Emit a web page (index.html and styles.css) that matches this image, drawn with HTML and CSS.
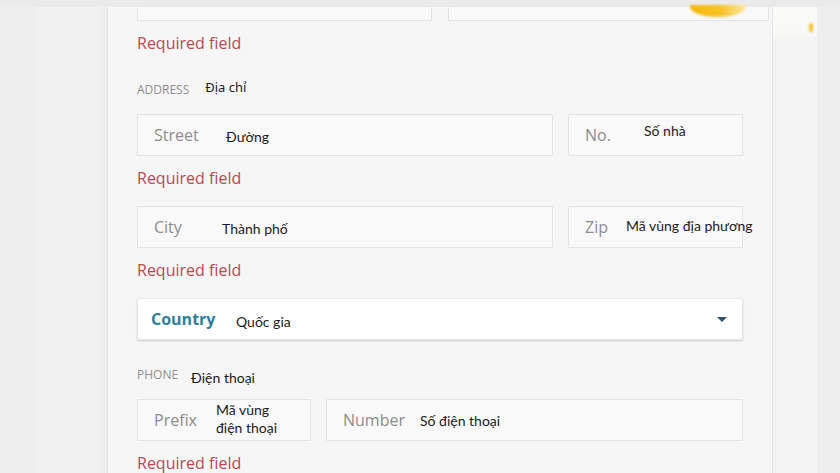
FILE: index.html
```html
<!DOCTYPE html>
<html lang="vi">
<head>
<meta charset="utf-8">
<title>Address form</title>
<link rel="stylesheet" href="styles.css">
</head>
<body>
<div class="topbar"></div>
<div class="stage">
  <div class="gutter"></div>
  <main class="panel">
    <span class="blob"></span>
    <div class="row row-top">
      <div class="box box-top1"></div>
      <div class="box box-top2"></div>
    </div>
    <div class="error">Required field</div>

    <div class="section section-address">
      <span class="section-name">ADDRESS</span>
      <span class="note note-address">Địa chỉ</span>
    </div>
    <div class="row row-first">
      <div class="box box-grow">
        <span class="label lab-street">Street</span>
        <span class="note note-down">Đường</span>
      </div>
      <div class="box box-small">
        <span class="label lab-no">No.</span>
        <span class="note note-up">Số nhà</span>
      </div>
    </div>
    <div class="error">Required field</div>

    <div class="row">
      <div class="box box-grow">
        <span class="label lab-city">City</span>
        <span class="note note-down">Thành phố</span>
      </div>
      <div class="box box-small">
        <span class="label lab-zip">Zip</span>
        <span class="note note-nowrap">Mã vùng địa phương</span>
      </div>
    </div>
    <div class="error">Required field</div>

    <div class="row">
      <div class="select">
        <span class="select-label">Country</span>
        <span class="note note-country">Quốc gia</span>
        <span class="caret"></span>
      </div>
    </div>

    <div class="section section-phone">
      <span class="section-name">PHONE</span>
      <span class="note note-phone">Điện thoại</span>
    </div>
    <div class="row row-first">
      <div class="box box-prefix">
        <span class="label lab-prefix">Prefix</span>
        <span class="note note-two">Mã vùng<br>điện thoại</span>
      </div>
      <div class="box box-grow">
        <span class="label lab-number">Number</span>
        <span class="note note-num">Số điện thoại</span>
      </div>
    </div>
    <div class="error">Required field</div>
  </main>
  <div class="side">
    <div class="side-top"><span class="dot"></span></div>
  </div>
  <div class="rest"></div>
</div>
</body>
</html>
```

FILE: styles.css
```css
* { box-sizing: border-box; }

html, body {
  margin: 0;
  padding: 0;
  background: #efefef;
  font-family: "Open Sans", "Noto Sans", sans-serif;
  overflow: hidden;
}

.topbar {
  height: 7px;
  background: #eaeaea;
}

.stage {
  display: flex;
  height: 466px;
}

.gutter {
  width: 107px;
  flex: none;
  background: linear-gradient(90deg, #eeeeee 0, #eeeeee 35px, #f1f1f1 40px, #f1f1f1 95px, #eeeeee 100px);
}

.panel {
  position: relative;
  width: 666px;
  flex: none;
  background: #f6f6f6;
  border-left: 1px solid #e4e4e4;
  border-right: 1px solid #e4e4e4;
  padding: 0 29px;
}

.blob {
  position: absolute;
  left: 582px;
  top: -2px;
  width: 56px;
  height: 12px;
  border-radius: 0 0 28px 28px / 0 0 10px 10px;
  background: linear-gradient(90deg, #f5b70d 0, #f9c327 55%, #fbe9a6 100%);
  filter: blur(1px);
}

.side {
  width: 44px;
  flex: none;
  background: #f3f3f3;
}

.side-top {
  position: relative;
  height: 34px;
  background: linear-gradient(180deg, #fbfbf9 0, #f8f8f6 80%, #f3f3f3 100%);
}

.dot {
  position: absolute;
  right: 4px;
  top: 16px;
  width: 4px;
  height: 9px;
  border-radius: 3px;
  background: #f6c22e;
  filter: blur(0.8px);
}

.rest {
  flex: 1;
  background: #eeeeee;
}

/* rows */
.row {
  display: flex;
  gap: 15px;
  margin-top: 18px;
}

.row-first { margin-top: 16px; }

.row-top {
  margin-top: 0;
  gap: 16px;
  height: 14px;
}

.box {
  height: 42px;
  background: #f9f9f9;
  border: 1px solid #e3e3e3;
  border-radius: 1px;
  display: flex;
  align-items: center;
  padding-left: 16px;
}

.box-top1 {
  width: 295px;
  height: 14px;
  border-top: 0;
  flex: none;
}

.box-top2 {
  width: 321px;
  height: 14px;
  border-top: 0;
  flex: none;
}

.box-grow { flex: 1; }
.box-small { width: 175px; flex: none; }
.box-prefix { width: 174px; flex: none; }

.label {
  font-size: 16px;
  line-height: 20px;
  color: #8c8c8c;
  flex: none;
}

.lab-street { width: 72px; }
.lab-no { width: 59px; }
.lab-city { width: 68px; }
.lab-zip { width: 41px; }
.lab-prefix { width: 62px; }
.lab-number { width: 77px; }

.note {
  font-family: Lato, "Noto Sans", sans-serif;
  font-size: 14px;
  line-height: 18px;
  color: #1b1b1b;
  position: relative;
}

.note-down { top: 2px; }
.note-up { top: -4px; }
.note-nowrap { white-space: nowrap; top: -1px; }
.note-two { line-height: 18px; top: -1px; }
.note-num { top: 1px; }

.error {
  margin-top: 12px;
  font-size: 16px;
  line-height: 20px;
  color: #b8494f;
}

.section {
  display: flex;
  align-items: center;
  height: 18px;
}

.section-address { margin-top: 27px; }
.section-phone { margin-top: 25px; }

.section-name {
  font-size: 12px;
  color: #8e8e8e;
  letter-spacing: 0;
}

.note-address {
  font-family: "Noto Sans", "Open Sans", sans-serif;
  font-size: 13px;
  margin-left: 16px;
  top: -2px;
}
.note-phone { margin-left: 13px; top: 4px; }

/* select */
.select {
  flex: 1;
  height: 42px;
  background: #ffffff;
  border: 1px solid #e6e6e6;
  border-radius: 2px;
  box-shadow: 0 1px 2px rgba(0, 0, 0, 0.18);
  display: flex;
  align-items: center;
  padding: 0 15px 0 13px;
}

.select-label {
  font-weight: 700;
  font-size: 16px;
  color: #2e7f9b;
  width: 85px;
  flex: none;
}

.note-country { top: 3px; flex: 1; }

.caret {
  width: 0;
  height: 0;
  border-left: 5px solid transparent;
  border-right: 5px solid transparent;
  border-top: 5px solid #30526a;
}
```
